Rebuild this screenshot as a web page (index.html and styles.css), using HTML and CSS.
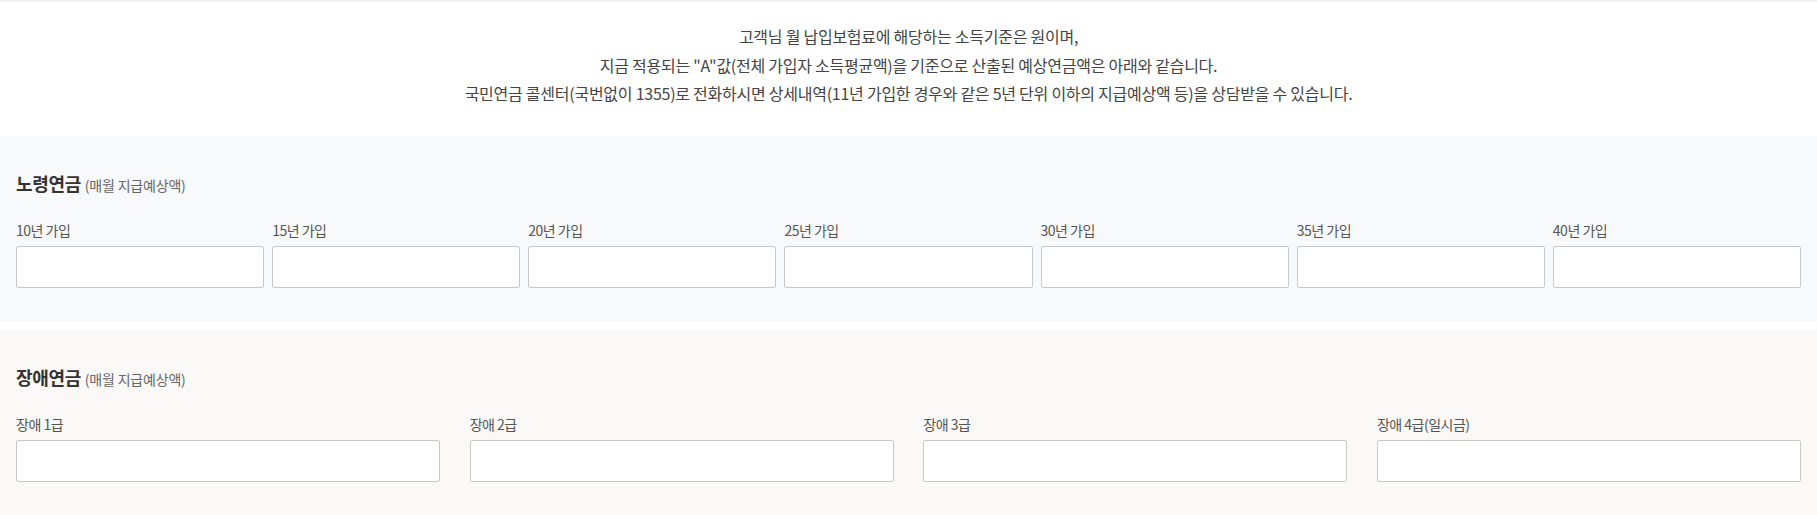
FILE: index.html
```html
<!DOCTYPE html>
<html>
<head>
  <title>예상연금액</title>
  <link rel="stylesheet" href="styles.css">
</head>
<body>
  <div class="topline"></div>
  <div class="intro">
    <p>고객님 월 납입보험료에 해당하는 소득기준은 원이며,</p>
    <p>지금 적용되는 "A"값(전체 가입자 소득평균액)을 기준으로 산출된 예상연금액은 아래와 같습니다.</p>
    <p>국민연금 콜센터(국번없이 1355)로 전화하시면 상세내역(11년 가입한 경우와 같은 5년 단위 이하의 지급예상액 등)을 상담받을 수 있습니다.</p>
  </div>

  <!-- 노령연금 -->
  <section class="box box-old">
    <h2>노령연금 <span>(매월 지급예상액)</span></h2>
    <div class="fields fields-7">
      <div class="field"><label>10년 가입</label><input type="text"></div>
      <div class="field"><label>15년 가입</label><input type="text"></div>
      <div class="field"><label>20년 가입</label><input type="text"></div>
      <div class="field"><label>25년 가입</label><input type="text"></div>
      <div class="field"><label>30년 가입</label><input type="text"></div>
      <div class="field"><label>35년 가입</label><input type="text"></div>
      <div class="field"><label>40년 가입</label><input type="text"></div>
    </div>
  </section>

  <!-- 장애연금 -->
  <section class="box box-dis">
    <h2>장애연금 <span>(매월 지급예상액)</span></h2>
    <div class="fields fields-4">
      <div class="field"><label>장애 1급</label><input type="text"></div>
      <div class="field"><label>장애 2급</label><input type="text"></div>
      <div class="field"><label>장애 3급</label><input type="text"></div>
      <div class="field"><label>장애 4급(일시금)</label><input type="text"></div>
    </div>
  </section>
</body>
</html>
```

FILE: styles.css
```css
body {
  margin: 0;
  padding: 0;
  font-family: "Noto Sans CJK KR", "Noto Sans", sans-serif;
  color: #444;
  background: #fff;
}
.topline {
  height: 2px;
  background-color: #f3f3f3;
}
.intro {
  padding: 20px 16px 28.5px;
  text-align: center;
  font-size: 16px;
  letter-spacing: -0.25px;
  line-height: 28.5px;
  color: #444;
}
.intro p {
  margin: 0;
}
.box {
  padding: 35px 16px 33px;
}
.box-old {
  background-color: #f8f9fb;
  margin-bottom: 9px;
}
.box-dis {
  background-color: #faf9f8;
}
.box h2 {
  margin: 0 0 23px;
  font-size: 18px;
  line-height: 24px;
  letter-spacing: -0.3px;
  font-weight: bold;
  color: #333;
}
.box h2 span {
  font-size: 14px;
  font-weight: normal;
  letter-spacing: -0.2px;
  color: #666;
}
.fields {
  display: grid;
}
.fields-7 {
  grid-template-columns: repeat(7, 1fr);
  gap: 8px;
}
.fields-4 {
  grid-template-columns: repeat(4, 1fr);
  gap: 29.5px;
}
.field label {
  display: block;
  font-size: 14px;
  line-height: 20px;
  letter-spacing: -0.5px;
  color: #555;
  margin-bottom: 6px;
}
.field input {
  display: block;
  box-sizing: border-box;
  width: 100%;
  height: 42px;
  margin: 0;
  border: 1px solid #c8c8c8;
  border-radius: 2px;
  background: #fff;
  padding: 0 10px;
  font-family: inherit;
}
```
